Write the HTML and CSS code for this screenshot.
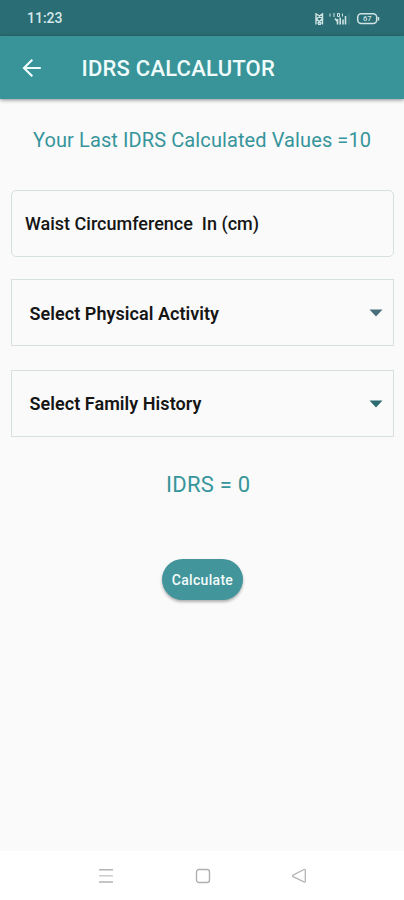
FILE: index.html
```
<!DOCTYPE html>
<html lang="en">
<head>
<meta charset="utf-8">
<meta name="viewport" content="width=device-width, initial-scale=1">
<title>IDRS CALCALUTOR</title>
<link rel="stylesheet" href="styles.css">
</head>
<body>
<div class="screen">
  <div class="status">
    <span class="clock">11:23</span>
    <svg class="indicators" width="66" height="14" viewBox="0 0 66 14" fill="none" stroke="#cde3e4">
      <path d="M2 1v11.500M8.500 1v11.500M2 1.500L8.500 6.500L3.500 11.500M8.500 1.500L2.500 7L7.500 11.500M4 12.300h3" stroke-width="1.400"/>
      <path d="M16 1.500v3M19 2h2M19 4h2M23.500 1.500h2v3h-2zM28.500 1.500v3" stroke-width="1"/>
      <path d="M21 6.500l2 2.500M23.500 7v5.500M26.200 5.500v7M29 7.500v5M31.500 4v8.500" stroke-width="1.600"/>
      <path d="M35 1v11.500" stroke="#4c8487"/>
      <rect x="43.700" y="1.700" width="19" height="9.800" rx="3.500" stroke-width="1.500"/>
      <path d="M64.500 5v3.500" stroke-width="1.500"/>
      <text class="charge" x="53.200" y="9.200" text-anchor="middle">67</text>
    </svg>
  </div>
  <header class="appbar">
    <svg class="back" width="20" height="20" viewBox="0 0 20 20" fill="none" stroke="#f0fcfc" stroke-width="2.200"><path d="M18.800 10H2.800M10.300 1.800L2 10l8.300 8.200"/></svg>
    <h1 class="title">IDRS CALCALUTOR</h1>
  </header>
  <main class="content">
    <p class="last">Your Last IDRS Calculated Values =10</p>
    <div class="field waist"><span>Waist Circumference&nbsp; In (cm)</span></div>
    <div class="field select activity"><span>Select Physical Activity</span><svg width="14" height="8" viewBox="0 0 14 8"><path d="M.5.500h13L7 7.500z" fill="#466f7b"/></svg></div>
    <div class="field select history"><span>Select Family History</span><svg width="14" height="8" viewBox="0 0 14 8"><path d="M.5.500h13L7 7.500z" fill="#2f6c72"/></svg></div>
    <p class="result">IDRS = 0</p>
    <button class="calculate" type="button">Calculate</button>
  </main>
  <nav class="navbar">
    <svg width="16" height="16" viewBox="0 0 16 16" fill="none" stroke="#b3b3b3" stroke-width="1.500"><path d="M1 1.700h14M1 14h14"/><path d="M1 7.800h14" stroke="#cccccc"/></svg>
    <svg width="16" height="16" viewBox="0 0 16 16" fill="none" stroke="#b0b0b0" stroke-width="1.400"><rect x="1.500" y="1.500" width="13" height="13" rx="2.500"/></svg>
    <svg width="16" height="16" viewBox="0 0 16 16" fill="none" stroke="#b5b5b5" stroke-width="1.300" stroke-linejoin="round"><path d="M2 7.200L13 1.500q1.300-.4 1.300 1V13q0 1.400-1.300.9L2 8.700q-1-.8 0-1.500z"/></svg>
  </nav>
</div>
</body>
</html>
```
FILE: styles.css
```
* { box-sizing: border-box; }
body, h1, p { margin: 0; }
body { font-family: Roboto, sans-serif; background: #fafafa; }
.screen { width: 404px; height: 900px; display: flex; flex-direction: column; overflow: hidden; }
.status { height: 36px; flex: none; background: #2b6d74; display: flex; align-items: center; justify-content: space-between; padding: 0 24px 0 27px; }
.clock { color: #d5e9ea; font-size: 14px; line-height: 16px; font-weight: 500; }
.indicators { margin-top: 2px; }
.charge { fill: #cde3e4; stroke: none; font-size: 7.5px; font-weight: 500; }
.appbar { height: 63px; flex: none; background: #399499; display: flex; align-items: center; padding-left: 22px; box-shadow: 0 1px 4px rgba(0, 0, 0, .45); }
.back { flex: none; }
.title { margin-left: 39.500px; margin-top: 2px; color: #f0fcfc; font-size: 22px; font-weight: 500; line-height: 28px; letter-spacing: .22px; white-space: nowrap; }
.content { flex: 1; display: flex; flex-direction: column; padding: 0 10px 0 11px; }
.last { margin-top: 28px; padding-left: 22px; height: 26px; line-height: 26px; font-size: 20px; letter-spacing: .1px; color: #36959a; white-space: nowrap; }
.field { height: 67px; display: flex; align-items: center; border: 1px solid #d8dfe1; color: #151515; font-size: 18px; white-space: nowrap; }
.waist { margin-top: 37px; padding-left: 13px; border-radius: 5px; font-weight: 500; }
.select { justify-content: space-between; padding: 0 10.500px 0 17.500px; font-weight: 600; letter-spacing: .05px; }
.activity { margin-top: 22px; padding-top: 1px; }
.history { margin-top: 24px; }
.result { margin-top: 34px; padding-left: 155px; line-height: 28px; font-size: 22px; letter-spacing: .25px; color: #36959a; white-space: nowrap; }
.calculate { margin: 60px 0 0 151px; padding: 0; width: 81px; height: 41px; border: 0; border-radius: 21px; background: #42959a; color: #f3fcfc; font: 500 14px Roboto, sans-serif; letter-spacing: .3px; box-shadow: 0 2px 3px rgba(0, 0, 0, .3); }
.navbar { height: 49px; flex: none; background: #fff; display: flex; justify-content: space-between; align-items: center; padding: 0 97px 0 98px; }
```
